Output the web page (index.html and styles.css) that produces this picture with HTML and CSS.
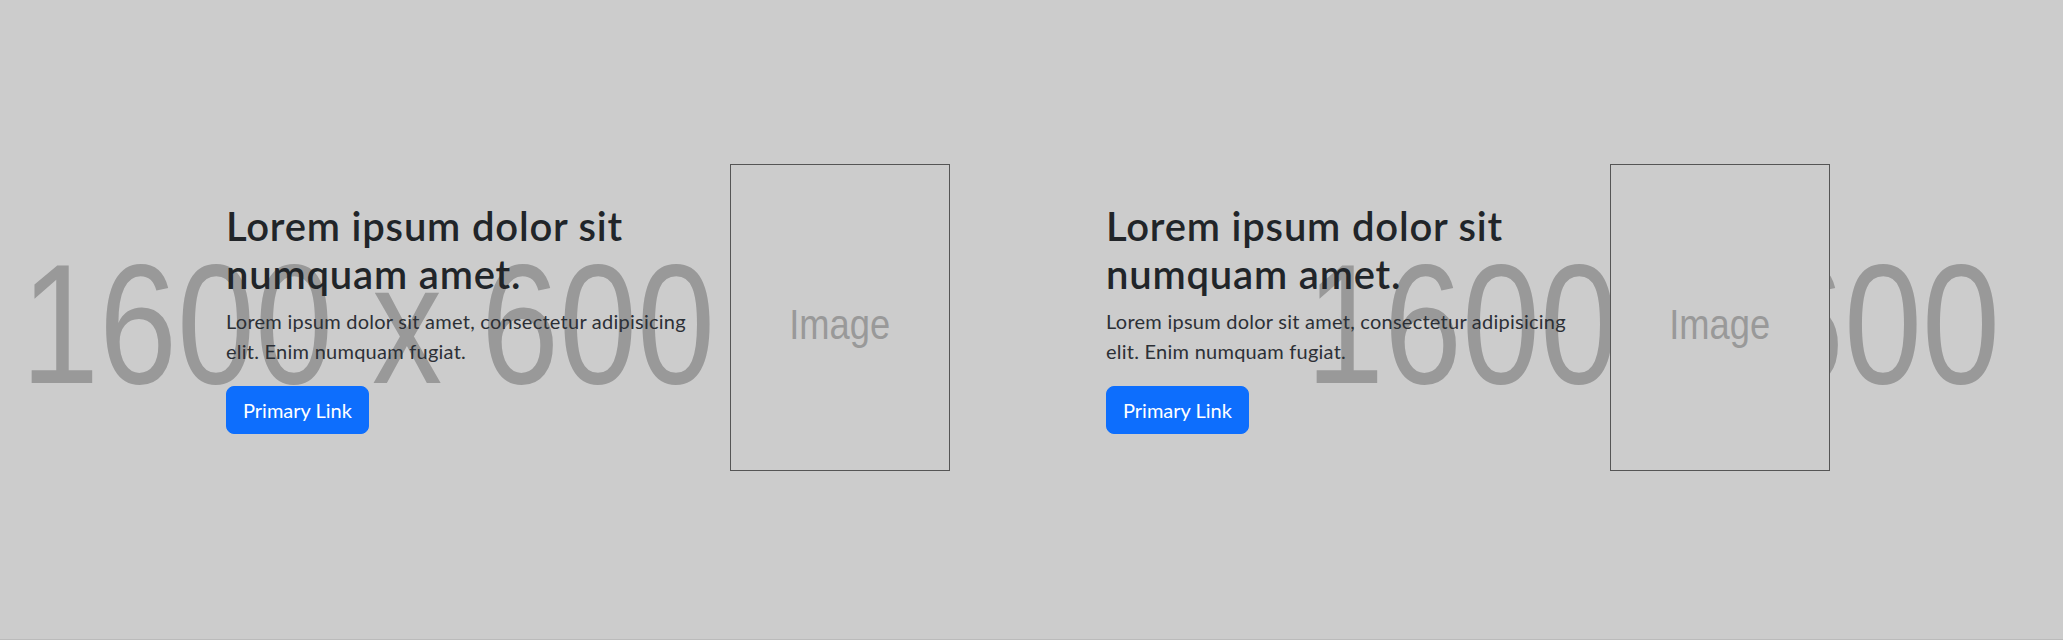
FILE: index.html
```html
<!DOCTYPE html>
<html lang="en">

<head>
    <meta charset="UTF-8">
    <meta name="viewport" content="width=device-width, initial-scale=1.0">
    <title>Hero Slides</title>
    <link rel="stylesheet" href="styles.css">
</head>

<body>

    <div class="stage">

        <!-- placeholder backdrop, like the 1600 x 600 dummy image -->
        <div class="backdrop">
            <span class="backdrop-text first">1600 x 600</span>
            <span class="backdrop-text second">1600 x 600</span>
        </div>

        <div class="slides">

            <div class="slide">
                <div class="slide-text">
                    <h1>Lorem ipsum dolor sit numquam amet.</h1>
                    <p class="lead">Lorem ipsum dolor sit amet, consectetur adipisicing elit. Enim numquam fugiat.</p>
                    <a href="#" class="btn-primary">Primary Link</a>
                </div>
                <div class="slide-image">
                    <span>Image</span>
                </div>
            </div>

            <div class="slide">
                <div class="slide-text">
                    <h1>Lorem ipsum dolor sit numquam amet.</h1>
                    <p class="lead">Lorem ipsum dolor sit amet, consectetur adipisicing elit. Enim numquam fugiat.</p>
                    <a href="#" class="btn-primary">Primary Link</a>
                </div>
                <div class="slide-image">
                    <span>Image</span>
                </div>
            </div>

        </div>

    </div>

</body>

</html>
```

FILE: styles.css
```css
body {
    font-family: Lato, "Noto Sans", sans-serif;
    background-color: #ccc;
    color: #212529;
    margin: 0;
    padding: 0;
}

.stage {
    position: relative;
    height: 639px;
    overflow: hidden;
    border-bottom: 1px solid #bbb;
}

.backdrop {
    position: absolute;
    top: 0;
    left: 0;
    right: 0;
    bottom: 0;
}

.backdrop-text {
    position: absolute;
    top: 239px;
    font-family: "Liberation Sans", Arial, sans-serif;
    font-size: 170px;
    line-height: 1;
    color: #999;
    white-space: pre;
    transform: scaleX(0.825);
    transform-origin: left top;
}

.backdrop-text.first {
    left: 21px;
}

.backdrop-text.second {
    left: 1306px;
}

.slides {
    position: relative;
    box-sizing: border-box;
    height: 100%;
    display: flex;
    align-items: center;
    gap: 156px;
    padding-left: 226px;
    padding-bottom: 4px;
}

.slide {
    display: flex;
    align-items: center;
    gap: 24px;
}

.slide-text {
    width: 480px;
}

.slide-text h1 {
    font-size: 40px;
    font-weight: 600;
    line-height: 1.2;
    letter-spacing: 0.8px;
    margin: 0 0 8px;
}

.lead {
    font-size: 20px;
    font-weight: 400;
    line-height: 1.5;
    letter-spacing: 0.25px;
    color: #2c3036;
    margin: 0 0 20px;
}

.btn-primary {
    display: inline-block;
    background-color: #0d6efd;
    color: white;
    text-decoration: none;
    font-size: 20px;
    line-height: 1.5;
    padding: 8px 16px;
    border: 1px solid #0d6efd;
    border-radius: 8px;
}

.slide-image {
    width: 218px;
    height: 305px;
    border: 1px solid #555;
    background-color: #ccc;
    display: flex;
    align-items: center;
    justify-content: center;
}

.slide-image span {
    font-family: "Liberation Sans", Arial, sans-serif;
    font-size: 43px;
    line-height: 1;
    color: #999;
    padding-top: 14px;
    transform: scaleX(0.845);
}
```
